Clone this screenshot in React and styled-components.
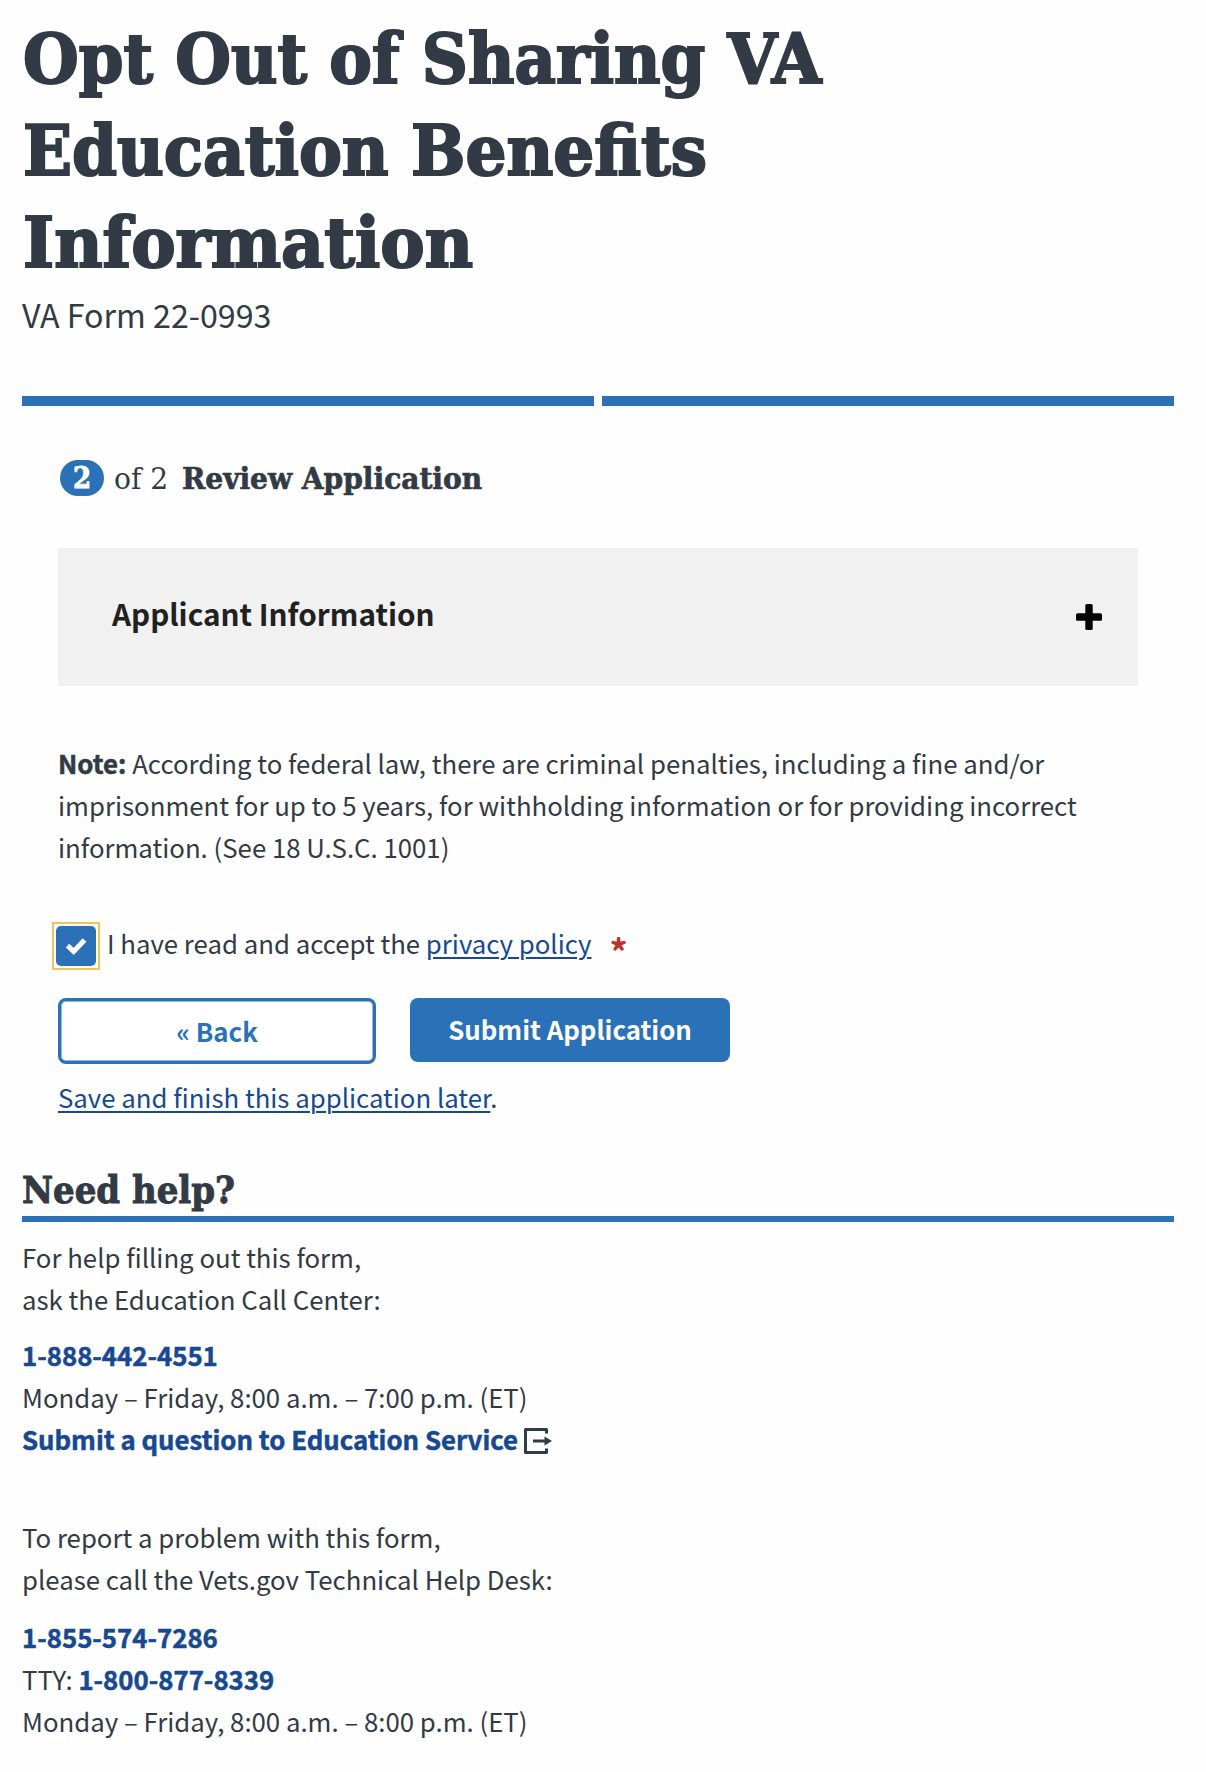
import React from "react";
import styled, { createGlobalStyle } from "styled-components";

const ink = "#323a45";
const blue = "#2a71b7";
const link = "#174892";
const sans = '"Noto Sans CJK SC", "Noto Sans", sans-serif';
const slab = '"DejaVu Serif Condensed", "DejaVu Serif", serif';

const Global = createGlobalStyle`
  *, *::before, *::after { box-sizing: border-box; }
  body {
    margin: 0;
    background: #fefefe;
    color: ${ink};
    font-family: ${sans};
    font-size: 25.78px;
    line-height: 42px;
  }
  h1, h2, p { margin: 0; }
`;

const Page = styled.main`
  width: 1206px;
  height: 1772px;
  padding: 13px 32px 0 22px;
  overflow: hidden;
`;

const Title = styled.h1`
  padding-left: 1px;
  font: bold 70px/92px ${slab};
  font-stretch: condensed;
  -webkit-text-stroke: 2px ${ink};
`;

const SlabText = styled.span`
  display: ${(p) => (p.$block ? "block" : "inline-block")};
  width: max-content;
  font-family: ${slab};
  font-stretch: condensed;
  white-space: pre;
  transform: scaleX(${(p) => p.$stretch || 1});
  transform-origin: left center;
`;

const FormNumber = styled.p`
  margin-top: 4px;
  font-size: 32.2px;
  line-height: 42px;
`;

const Progress = styled.div`
  display: grid;
  grid-template-columns: 1fr 1fr;
  gap: 8px;
  margin-top: 61px;
`;

const Segment = styled.div`
  height: 10px;
  background: ${blue};
`;

const Form = styled.section`
  padding: 54px 36px 0;
`;

const StepHeading = styled.h2`
  display: flex;
  align-items: center;
  height: 36px;
  padding-left: 2px;
  font: normal 29px/38px ${slab};
`;

const StepBadge = styled.span`
  width: 44px;
  height: 36px;
  margin-right: 10px;
  border-radius: 18px;
  background: ${blue};
  color: #fff;
  font-weight: bold;
  line-height: 37px;
  text-align: center;
  -webkit-text-stroke: 0.8px #fff;
`;

const StepCount = styled.span`
  width: 68px;
  padding-top: 2px;
`;

const StepName = styled.b`
  padding-top: 2px;
  -webkit-text-stroke: 0.6px ${ink};
`;

const Accordion = styled.button`
  display: flex;
  align-items: center;
  justify-content: space-between;
  width: 100%;
  height: 138px;
  margin-top: 52px;
  padding: 0 36px 6px 54px;
  border: 0;
  background: #f1f1f1;
  color: #212121;
  font: bold 29.7px/42px ${sans};
`;

const PlusIcon = styled.svg`
  width: 26px;
  height: 26px;
  margin-top: 6px;
`;

const Note = styled.p`
  margin-top: 56px;
`;

const Line = styled.span`
  display: block;
  white-space: pre;
`;

const Strong = styled.b`
  -webkit-text-stroke: 0.5px currentColor;
`;

const Policy = styled.div`
  display: flex;
  align-items: center;
  margin: 54px 0 0 -6px;
  height: 48px;
`;

const Checkbox = styled.span`
  display: flex;
  width: 48px;
  height: 48px;
  padding: 2px;
  margin-right: 7px;
  border: 2px solid #f0c45a;
`;

const CheckFill = styled.span`
  display: flex;
  align-items: center;
  justify-content: center;
  width: 40px;
  height: 40px;
  border-radius: 5px;
  background: ${blue};
`;

const PolicyLabel = styled.span`
  display: flex;
  height: 48px;
  white-space: pre;
`;

const Link = styled.a`
  color: ${link};
  text-decoration: underline;
  text-decoration-thickness: 2px;
  text-underline-offset: 3px;
`;

const Required = styled.span`
  margin-left: 18px;
  padding-top: 7px;
  color: #c0322d;
  font-weight: bold;
  font-size: 36px;
`;

const Buttons = styled.div`
  display: flex;
  align-items: flex-start;
  gap: 34px;
  margin-top: 28px;
`;

const Button = styled.button`
  width: ${(p) => (p.$primary ? 320 : 318)}px;
  height: ${(p) => (p.$primary ? 64 : 66)}px;
  padding: 0 0 ${(p) => (p.$primary ? 2 : 0)}px;
  border: ${(p) => (p.$primary ? "0" : `3px solid ${blue}`)};
  border-radius: 8px;
  background: ${(p) => (p.$primary ? blue : "#fff")};
  box-shadow: ${(p) => (p.$primary ? "none" : "inset 0 0 0 1px rgba(42, 113, 183, 0.5)")};
  color: ${(p) => (p.$primary ? "#fff" : blue)};
  font: bold 25.8px/42px ${sans};
`;

const SaveLine = styled.p`
  margin-top: 12px;
`;

const Help = styled.section``;

const HelpHeading = styled.h2`
  height: 57px;
  margin-top: 47px;
  border-bottom: 6px solid ${blue};
  font: bold 38px/50px ${slab};
  -webkit-text-stroke: 0.9px ${ink};
`;

const HelpText = styled.p`
  margin-top: ${(p) => p.$gap}px;
`;

const HelpLink = styled.a`
  color: ${link};
  font-weight: bold;
  -webkit-text-stroke: 0.5px ${link};
`;

const ExitIcon = styled.svg`
  width: 28px;
  height: 26px;
  margin-left: 6px;
  vertical-align: -4px;
`;

export default function App() {
  return (
    <>
      <Global />
      <Page>
        <Title>
          <SlabText $block $stretch={1.016}>Opt Out of Sharing VA</SlabText>
          <SlabText $block $stretch={1.022}>Education Benefits</SlabText>
          <SlabText $block $stretch={1.057}>Information</SlabText>
        </Title>
        <FormNumber>VA Form 22-0993</FormNumber>
        <Progress>
          <Segment />
          <Segment />
        </Progress>
        <Form>
          <StepHeading>
            <StepBadge>2</StepBadge>
            <StepCount>
              <SlabText $stretch={1.08}>of 2</SlabText>
            </StepCount>
            <StepName>
              <SlabText $stretch={1.075}>Review Application</SlabText>
            </StepName>
          </StepHeading>
          <Accordion>
            <span>Applicant Information</span>
            <PlusIcon viewBox="0 0 26 26">
              <rect x="9.3" y="0" width="7.4" height="26" rx="1.5" />
              <rect x="0" y="9.3" width="26" height="7.4" rx="1.5" />
            </PlusIcon>
          </Accordion>
          <Note>
            <Line>
              <Strong>Note:</Strong> According to federal law, there are criminal penalties, including a fine and/or
            </Line>
            <Line>imprisonment for up to 5 years, for withholding information or for providing incorrect</Line>
            <Line>information. (See 18 U.S.C. 1001)</Line>
          </Note>
          <Policy>
            <Checkbox>
              <CheckFill>
                <svg width="22" height="18" viewBox="0 0 22 18">
                  <path d="M2.5 8.6 L8.7 14.4 L19.5 3" fill="none" stroke="#fff" strokeWidth="5" />
                </svg>
              </CheckFill>
            </Checkbox>
            <PolicyLabel>
              {"I have read and accept the "}
              <Link>privacy policy</Link>
              <Required>*</Required>
            </PolicyLabel>
          </Policy>
          <Buttons>
            <Button>« Back</Button>
            <Button $primary>Submit Application</Button>
          </Buttons>
          <SaveLine>
            <Link>Save and finish this application later</Link>.
          </SaveLine>
        </Form>
        <Help>
          <HelpHeading>
            <SlabText $stretch={0.995}>Need help?</SlabText>
          </HelpHeading>
          <HelpText $gap={14}>
            <Line>For help filling out this form,</Line>
            <Line>ask the Education Call Center:</Line>
          </HelpText>
          <HelpText $gap={14}>
            <Line>
              <HelpLink>1-888-442-4551</HelpLink>
            </Line>
            <Line>Monday – Friday, 8:00 a.m. – 7:00 p.m. (ET)</Line>
            <Line>
              <HelpLink>Submit a question to Education Service</HelpLink>
              <ExitIcon viewBox="0 0 28 26">
                <path d="M22.5 5.5V1.5H1.5V24.5H22.5V20.5" fill="none" stroke={ink} strokeWidth="3" strokeLinejoin="round" />
                <path d="M9 13H22" stroke={ink} strokeWidth="3" />
                <path d="M20.5 8.5L28 13L20.5 17.5Z" fill={ink} />
              </ExitIcon>
            </Line>
          </HelpText>
          <HelpText $gap={56}>
            <Line>To report a problem with this form,</Line>
            <Line>please call the Vets.gov Technical Help Desk:</Line>
          </HelpText>
          <HelpText $gap={16}>
            <Line>
              <HelpLink>1-855-574-7286</HelpLink>
            </Line>
            <Line>
              TTY: <HelpLink>1-800-877-8339</HelpLink>
            </Line>
            <Line>Monday – Friday, 8:00 a.m. – 8:00 p.m. (ET)</Line>
          </HelpText>
        </Help>
      </Page>
    </>
  );
}
